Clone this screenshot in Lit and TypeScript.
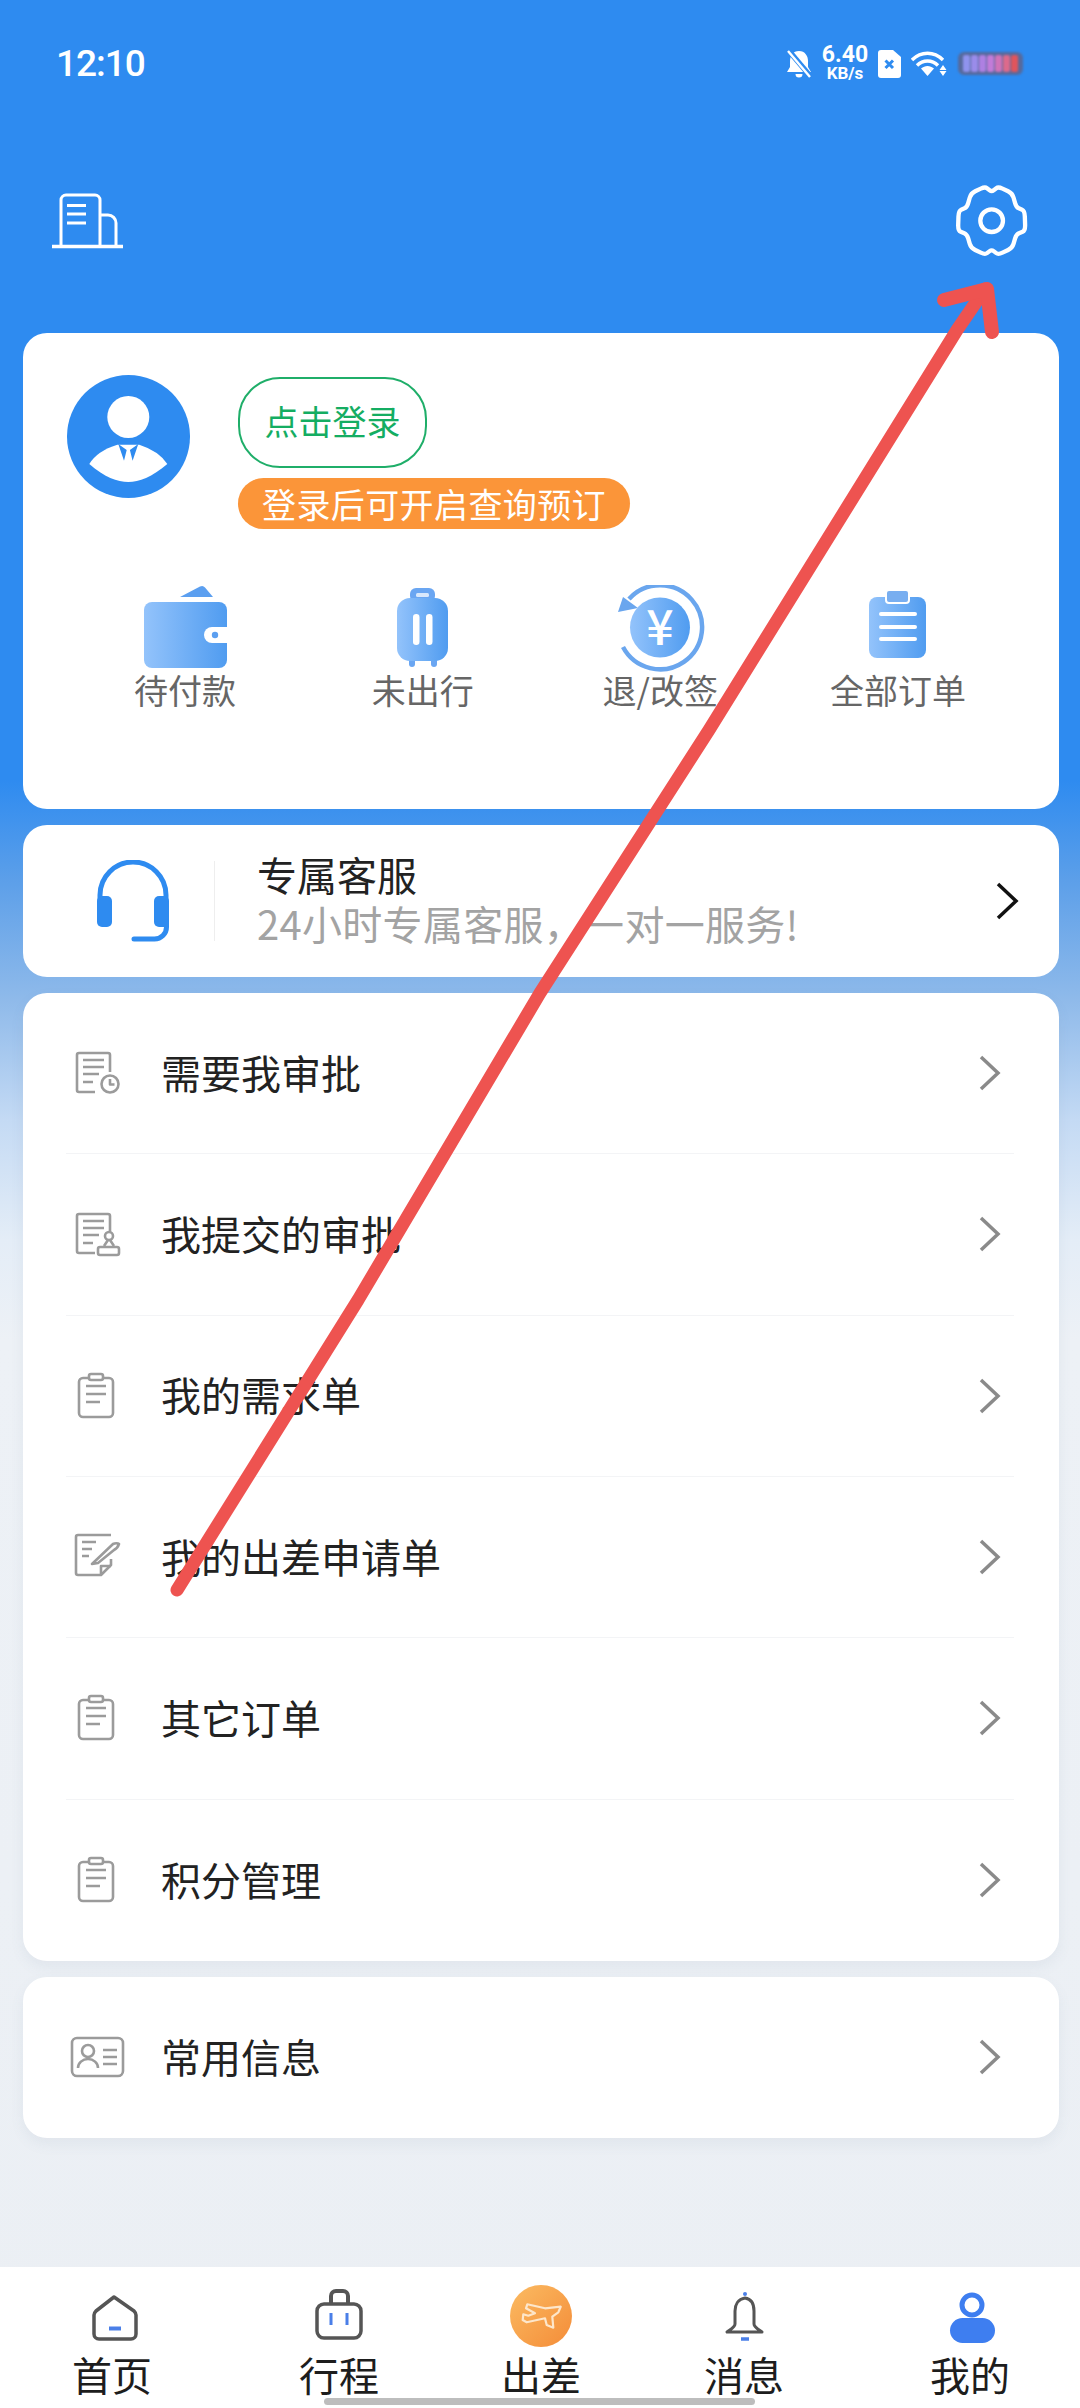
import { LitElement, html, css, svg } from "lit";
import { customElement } from "lit/decorators.js";

const gearPath = () => {
  const half: [number, number][] = [
    [186, 65], [206, 50], [248, 70], [260, 112], [285, 122], [287, 182], [260, 193], [248, 234], [206, 254], [186, 239],
  ];
  const pts = [...half, ...half.slice(1, -1).reverse().map(([x, y]) => [372 - x, y] as [number, number])];
  const lerp = (a: [number, number], b: [number, number], t: number) =>
    `${(a[0] + (b[0] - a[0]) * t).toFixed(1)} ${(a[1] + (b[1] - a[1]) * t).toFixed(1)}`;
  let d = "";
  pts.forEach((p, i) => {
    const prev = pts[(i - 1 + pts.length) % pts.length];
    const next = pts[(i + 1) % pts.length];
    d += `${i === 0 ? "M" : "L"}${lerp(p, prev, 0.3)}Q${p[0]} ${p[1]} ${lerp(p, next, 0.3)}`;
  });
  return d + "Z";
};

const docBase = svg`<path d="M44 23V6a2 2 0 0 0-2-2H13a2 2 0 0 0-2 2V41a2 2 0 0 0 2 2H29"/><path d="M17 11H38M17 18H38M17 25H33M17 33H27"/>`;
const clip = svg`<rect x="13" y="6" width="34" height="39" rx="4"/><rect x="23" y="2" width="14" height="6" rx="2" fill="#fff"/><path d="M20 14H40M20 22H40M20 30H34"/>`;

const rowIcons: Record<string, unknown> = {
  clock: svg`${docBase}<circle cx="44" cy="35" r="8.5" fill="#fff"/><path d="M44 30v5.5h4.5"/>`,
  stamp: svg`${docBase}<circle cx="43" cy="26" r="4" fill="#fff"/><path d="M42 30l-4 6M44 30l4 6" /><rect x="32" y="37" width="21" height="8" rx="2" fill="#fff"/>`,
  clip,
  edit: svg`<path d="M45 2H12a2 2 0 0 0-2 2V40a2 2 0 0 0 2 2H35l10-10V26"/><path d="M16 9H30M16 16H26M16 23H23"/><path d="M26 31L47 11c2-1 5-1 6 0-1 3-3 5-5 6L32 30z"/><path d="M35 42V33h10"/>`,
  id: svg`<rect x="6" y="5" width="51" height="38" rx="5"/><circle cx="22" cy="18" r="6"/><path d="M12 35a10 9 0 0 1 20 0"/><path d="M37 17H51M37 24H51M37 31H51"/>`,
};

const rows1 = [
  ["clock", "需要我审批"],
  ["stamp", "我提交的审批"],
  ["clip", "我的需求单"],
  ["edit", "我的出差申请单"],
  ["clip", "其它订单"],
  ["clip", "积分管理"],
];

const grad = (id: string) => svg`<defs><linearGradient id=${id} x1="0" y1="0" x2="1" y2="0"><stop offset="0" stop-color="#93c3fb"/><stop offset="1" stop-color="#509cf0"/></linearGradient></defs>`;

const orderIcons = [
  svg`${grad("gw")}<path d="M45 12L65 1.500q3-1.500 5 1L78 12z" fill="#5b9ff0"/><rect x="9" y="17" width="83" height="66" rx="8" fill="url(#gw)"/><path d="M93 42H77a8 8 0 0 0 0 16H93z" fill="#fff"/><circle cx="80" cy="50" r="3.200" fill="#5b9ff0"/>`,
  svg`${grad("gs")}<rect x="37" y="3" width="25" height="14" rx="6" fill="#6aa6f2"/><rect x="43" y="8" width="13" height="4" rx="1.500" fill="#d8e8fc"/><rect x="36" y="72" width="6" height="10" rx="3" fill="#6aa6f2"/><rect x="58" y="72" width="6" height="10" rx="3" fill="#6aa6f2"/><rect x="24" y="13" width="51" height="63" rx="13" fill="url(#gs)"/><rect x="40" y="29" width="6.500" height="31" rx="3.200" fill="#fff"/><rect x="53" y="29" width="6.500" height="31" rx="3.200" fill="#fff"/>`,
  svg`${grad("gr")}<path d="M19 14A42 42 0 1 1 13 62" fill="none" stroke="#6aa6ee" stroke-width="4.500"/><path d="M8 27L13 12 28 23z" fill="#6aa6ee"/><circle cx="50" cy="42.500" r="30" fill="url(#gr)"/><text x="50" y="60" text-anchor="middle" font-size="48" font-weight="500" fill="#fff" font-family="Noto Sans CJK SC">¥</text>`,
  svg`${grad("gc")}<rect x="21" y="12" width="57" height="61" rx="8" fill="url(#gc)"/><rect x="38" y="5" width="23" height="13" rx="3" fill="#78aef0" stroke="#fff" stroke-width="2"/><path d="M33 29H67M33 42H67M33 54H67" stroke="#fff" stroke-width="4" stroke-linecap="round"/>`,
];

const orders = ["待付款", "未出行", "退/改签", "全部订单"];

const navIcons = [
  svg`<path d="M37 13L19 27q-2 2-2 4V50a5 5 0 0 0 5 5H54a5 5 0 0 0 5-5V31q0-2-2-4z" fill="none" stroke="#555" stroke-width="3.500" stroke-linejoin="round"/><path d="M32 44.500H44" stroke="#4a7fe8" stroke-width="4"/>`,
  svg`<path d="M27 20V12a5 5 0 0 1 5-5H39a5 5 0 0 1 5 5V20" fill="none" stroke="#555" stroke-width="4"/><rect x="13" y="20" width="44" height="34" rx="7" fill="none" stroke="#555" stroke-width="3.500"/><path d="M27 29V41M43 29V41" stroke="#4a7fe8" stroke-width="3"/>`,
  svg`<defs><linearGradient id="go" x1="0" y1="0" x2="1" y2="1"><stop offset="0" stop-color="#fbbb62"/><stop offset="1" stop-color="#f48c38"/></linearGradient></defs><circle cx="35" cy="32" r="31" fill="url(#go)"/><path d="M54.700 22.700L39 24.300 21.300 20.300 20 24.300 29 29.300 22.300 31.700 17.300 30.300 16.700 36 20.700 38.300 39 34.300 40.700 41 47.300 43.700 46.300 32.700 52.300 28.300z" fill="none" stroke="#fde6ca" stroke-width="2.200" stroke-linejoin="round"/>`,
  svg`<circle cx="36" cy="10" r="2" fill="#4a7fe8"/><path d="M36 14c-7 1-10 7-10 13V40c0 3-4 5-8 8H53c-4-3-8-5-8-8V27c0-6-2-12-9-13z" fill="none" stroke="#555" stroke-width="3" stroke-linejoin="round"/><path d="M32 55H40" stroke="#4a7fe8" stroke-width="3.500"/>`,
  svg`<ellipse cx="37" cy="21" rx="10" ry="10" fill="none" stroke="#3e7ef0" stroke-width="5"/><rect x="15" y="34" width="45" height="25" rx="12.500" fill="#3e7ef0"/>`,
];
const navLabels = ["首页", "行程", "出差", "消息", "我的"];

@customElement("app-root")
export class AppRoot extends LitElement {
  static styles = css`
    :host { display: block; width: 1080px; height: 2408px; font-family: "Noto Sans CJK SC", "Noto Sans", sans-serif; }
    * { box-sizing: border-box; }
    svg { display: block; flex: none; }
    .page {
      position: relative; width: 1080px; height: 2408px; overflow: hidden;
      display: flex; flex-direction: column;
      background: linear-gradient(180deg, #2e8bf0 0, #2e8bf0 780px, #5c9fe9 880px, #8fbaea 1000px, #c4daf4 1120px, #e4edf7 1240px, #edf1f6 1340px, #ebeff4 100%);
    }
    .status { height: 127px; flex: none; padding: 0 57px 0 56px; display: flex; align-items: center; justify-content: space-between; color: #fff; }
    .time { font-family: "Roboto", sans-serif; font-weight: 500; font-size: 37px; letter-spacing: -1px; line-height: 40px; }
    .sys { display: flex; align-items: center; gap: 10px; }
    .speed { width: 48px; margin-left: -1px; margin-right: -1px; display: flex; flex-direction: column; align-items: center; font-family: "Roboto", sans-serif; font-weight: 700; }
    .speed b { font-size: 23px; line-height: 20px; font-weight: 700; }
    .speed span { font-size: 17px; line-height: 17px; }
    .batt { width: 65px; height: 23px; border-radius: 6px; background: #566a9d; padding: 3px 5px; display: flex; gap: 1.500px; filter: blur(.8px); margin-left: 1px; }
    .batt i { flex: 1; border-radius: 2px; }
    .tools { flex: none; margin-top: 58px; margin-bottom: 76px; height: 72px; padding: 0 52px 0 52px; display: flex; justify-content: space-between; align-items: center; }
    .stack { flex: 1; display: flex; flex-direction: column; gap: 16px; padding: 0 21px 0 23px; }
    .card { background: #fff; border-radius: 24px; }
    .me { height: 476px; padding: 42px 0 0 44px; }
    .head { display: flex; gap: 48px; }
    .avatar { width: 123px; height: 123px; }
    .who { padding-top: 2px; display: flex; flex-direction: column; align-items: flex-start; gap: 10px; }
    .login { height: 91px; width: 189px; border: 2px solid #1fae69; border-radius: 42px; color: #14ad62; font-size: 34px; line-height: 1; padding-bottom: 4px; display: flex; align-items: center; justify-content: center; }
    .hint { height: 51px; width: 392px; justify-content: center; border-radius: 26px; background: #fb9539; color: #fff; font-size: 34px; letter-spacing: .4px; line-height: 1; display: flex; align-items: center; }
    .orders { margin-top: 56px; margin-left: -1px; display: grid; grid-template-columns: 238px 237.500px 237.500px 238px; }
    .order { display: flex; flex-direction: column; align-items: center; color: #666; font-size: 34px; line-height: 34px; }
    .order span { margin-top: -2px; }
    .service { height: 152px; display: flex; align-items: center; padding: 0 40px 0 74px; }
    .service .div { width: 1px; height: 80px; background: #eee; margin: 0 42px 0 45px; }
    .service .txt { flex: 1; display: flex; flex-direction: column; padding-bottom: 3px; }
    .service .t1 { font-size: 40px; line-height: 46px; color: #222; }
    .service .t2 { font-size: 40px; line-height: 52px; letter-spacing: .3px; color: #a3a3a3; }
    .list { padding: 0 45px 0 43px; box-shadow: 0 6px 14px rgba(90, 110, 140, .08); }
    .row { height: 161.330px; display: flex; align-items: center; border-bottom: 1.500px solid #f3f4f6; }
    .row.last { border-bottom: 0; }
    .one { height: 161px; box-shadow: 0 6px 14px rgba(90, 110, 140, .08); }
    .row .ic { width: 95px; flex: none; }
    .row .ic svg { fill: none; stroke: #9b9b9b; stroke-width: 2.600; stroke-linejoin: round; }
    .row .lbl { flex: 1; font-size: 40px; line-height: 46px; color: #222; padding-bottom: 3px; }
    .chev { margin-right: 12px; }
    .nav { flex: none; height: 141px; background: #fff; padding-top: 17px; display: grid; grid-template-columns: 224px 230px 174px 232px 220px; }
    .nav div { display: flex; flex-direction: column; align-items: center; font-size: 40px; line-height: 44px; color: #1d1d1d; gap: 4px; }
    .bar { position: absolute; left: 324px; top: 2398px; width: 431px; height: 7px; border-radius: 4px; background: #bdbdbd; }
    .arrow { position: absolute; left: 0; top: 0; pointer-events: none; }
  `;

  render() {
    const batt = ["#8f93ee", "#9a8cea", "#ae80e2", "#c27bd8", "#d073b8", "#dc6a8c", "#e0555c"];
    return html`
      <div class="page">
        <div class="status">
          <span class="time">12:10</span>
          <div class="sys">
            <svg width="26" height="28" viewBox="0 0 26 28"><path d="M13 1C7 1 4 6 4 11V17L1 22H25L22 17V11C22 6 19 1 13 1zM9.500 24h7a3.500 3.500 0 0 1-7 0z" fill="#fff"/><path d="M3 1L25 27" stroke="#2e8bf0" stroke-width="5.500"/><path d="M2 1L24 27" stroke="#fff" stroke-width="2.400"/></svg>
            <div class="speed"><b>6.40</b><span>KB/s</span></div>
            <svg width="23" height="28" viewBox="0 0 23 28"><path d="M3 0H15L23 7V25a3 3 0 0 1-3 3H3a3 3 0 0 1-3-3V3a3 3 0 0 1 3-3z" fill="#fff"/><path d="M7.500 10.500L15 18M15 10.500L7.500 18" stroke="#2e8bf0" stroke-width="3"/></svg>
            <svg width="36" height="26" viewBox="0 0 36 26"><g fill="none" stroke="#fff" stroke-width="3.400"><path d="M1 9C10 0 23 0 32 9"/><path d="M6 14.500C12 8.500 21 8.500 27 14.500"/></g><path d="M10 17.500c4-3.500 9-3.500 13 0L16.500 25z" fill="#fff"/><path d="M32 14l3.500 5h-7zM32 25l3.500-5h-7z" fill="#fff"/></svg>
            <div class="batt">${batt.map((c) => html`<i style="background:${c}"></i>`)}</div>
          </div>
        </div>

        <div class="tools">
          <svg width="72" height="56" viewBox="0 0 72 56" fill="none" stroke="#fff" stroke-width="3">
            <path d="M9 53V7a5 5 0 0 1 5-5H43a5 5 0 0 1 5 5V53"/>
            <path d="M48 22H56a8 8 0 0 1 8 8V53"/>
            <path d="M0 53.500H71" stroke-width="3.500"/>
            <path d="M15 12.500H34M15 21H34M15 30H34"/>
          </svg>
          <svg width="73.300" height="73.300" viewBox="76 42 220 220" fill="none" stroke="#fff" stroke-width="13" stroke-linejoin="round">
            <path d=${gearPath()}/>
            <circle cx="186" cy="152" r="34"/>
          </svg>
        </div>

        <div class="stack">
          <section class="card me">
            <div class="head">
              <svg class="avatar" viewBox="0 0 123 123">
                <circle cx="61.500" cy="61.500" r="61.500" fill="#2e8bf0"/>
                <circle cx="61.300" cy="42" r="21" fill="#fff"/>
                <path d="M22.300 89Q30 76 50.300 69.700H72.300Q92 76 100.300 89C85 102 72 107 61.300 107S37 102 22.300 89z" fill="#fff"/>
                <path d="M51.300 69L57 85.700 59.700 75zM71.300 69L65.600 85.700 62.900 75z" fill="#2e8bf0"/>
              </svg>
              <div class="who">
                <div class="login">点击登录</div>
                <div class="hint">登录后可开启查询预订</div>
              </div>
            </div>
            <div class="orders">
              ${orders.map((o, i) => html`<div class="order"><svg width="100" height="90" viewBox="0 0 100 90">${orderIcons[i]}</svg><span>${o}</span></div>`)}
            </div>
          </section>

          <section class="card service">
            <svg width="72" height="82" viewBox="0 0 72 82" fill="none" stroke="#2e8bf0" stroke-width="5">
              <path d="M3 42V35a33 33 0 0 1 66 0V66"/>
              <rect x="0" y="36" width="15" height="31" rx="5" fill="#2e8bf0" stroke="none"/>
              <rect x="57" y="36" width="15" height="31" rx="5" fill="#2e8bf0" stroke="none"/>
              <path d="M69.500 62V67a12 12 0 0 1-12 12H37" stroke-linecap="round" stroke-width="5"/>
            </svg>
            <div class="div"></div>
            <div class="txt">
              <span class="t1">专属客服</span>
              <span class="t2">24小时专属客服，一对一服务!</span>
            </div>
            <svg width="24" height="38" viewBox="0 0 24 38" fill="none" stroke="#111" stroke-width="3.500"><path d="M3 2L21 19 3 36"/></svg>
          </section>

          <section class="card list">
            ${rows1.map(([ic, t], i) => this.row(ic, t, i === rows1.length - 1))}
          </section>

          <section class="card list one">
            ${this.row("id", "常用信息", true, 161)}
          </section>
        </div>

        <nav class="nav">
          ${navLabels.map((l, i) => html`<div><svg width="70" height="64" viewBox="0 0 70 64">${navIcons[i]}</svg><span>${l}</span></div>`)}
        </nav>

        <div class="bar"></div>

        <svg class="arrow" width="1080" height="2408" viewBox="0 0 1080 2408" fill="none" stroke="#ee5350" stroke-linecap="round" stroke-linejoin="round">
          <path d="M177 1590L358 1300 540 993 709 730 957 330 985 289" stroke-width="13"/>
          <path d="M944 300L987 289 992 332" stroke-width="14"/>
        </svg>
      </div>
    `;
  }

  row(ic: string, t: string, last = false, h?: number) {
    return html`<div class="row ${last ? "last" : ""}" style=${h ? `height:${h}px` : ""}>
      <div class="ic"><svg width="60" height="48" viewBox="0 0 60 48">${rowIcons[ic]}</svg></div>
      <span class="lbl">${t}</span>
      <svg class="chev" width="24" height="36" viewBox="0 0 24 36" fill="none" stroke="#8a8a8a" stroke-width="3.500"><path d="M3 2L20 18 3 34"/></svg>
    </div>`;
  }
}
